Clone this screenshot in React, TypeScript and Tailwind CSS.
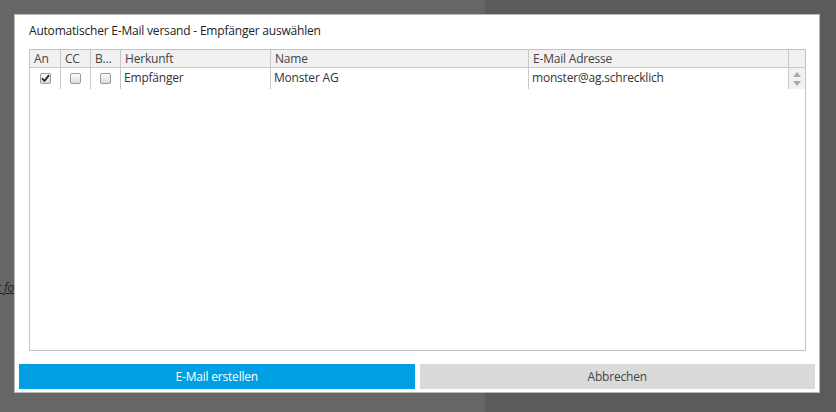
import React from 'react';

const font = { fontFamily: '"Open Sans", "Liberation Sans", sans-serif' };

function Checkbox({ checked }: { checked?: boolean }) {
  return (
    <span className="flex h-[11px] w-[11px] items-center justify-center rounded-[2px] border border-[#9a9a9a] bg-gradient-to-b from-[#fdfdfd] to-[#dcdcdc]">
      {checked ? (
        <svg width="9" height="9" viewBox="0 0 9 9">
          <path d="M1.5 4.8 L3.5 7 L7.6 1.6" fill="none" stroke="#2a2a2a" strokeWidth="1.8" strokeLinecap="round" strokeLinejoin="round" />
        </svg>
      ) : null}
    </span>
  );
}

const cols = [
  { key: 'an', label: 'An', w: 'w-[31px]' },
  { key: 'cc', label: 'CC', w: 'w-[30px]' },
  { key: 'bcc', label: 'B...', w: 'w-[30px]' },
  { key: 'herkunft', label: 'Herkunft', w: 'w-[150px]' },
  { key: 'name', label: 'Name', w: 'w-[258px]' },
  { key: 'email', label: 'E-Mail Adresse', w: 'w-[260px]' },
];

export default function App() {
  return (
    <div className="relative flex h-[412px] w-[836px] overflow-hidden text-[12px] tracking-[-0.2px]" style={font}>
      <div className="h-full w-[485px] bg-[#666666]" />
      <div className="h-full flex-1 bg-[#5b5b5b]" />

      {/* page content behind the overlay */}
      <div className="absolute left-0 top-[279px] flex w-[14px] justify-end overflow-hidden">
        <span className="whitespace-nowrap pr-[0px] italic text-[#1c1c2a] underline">Klicken Sie hier, um t fo</span>
      </div>

      <div className="absolute left-[14px] top-[14px] flex h-[379px] w-[806px] flex-col border border-[#b9b9b9] bg-white">
        <div className="pl-[14px] pt-[7px] text-[12px] leading-[18px] text-[#222]">
          Automatischer E-Mail versand - Empfänger auswählen
        </div>

        <div className="ml-[14px] mt-[9px] h-[302px] w-[777px] border border-[#c2c2c2]">
          <div className="flex h-[18px] border-b border-[#c8c8c8] bg-[#f1f1f1] leading-[17px] text-[#444]">
            {cols.map((c) => (
              <div key={c.key} className={`${c.w} overflow-hidden whitespace-nowrap border-r border-[#c8c8c8] pl-[4px]`}>
                {c.label}
              </div>
            ))}
            <div className="w-[16px]" />
          </div>

          <div className="flex h-[21px] leading-[20px] text-[#333]">
            <div className="flex w-[31px] items-center justify-center border-r border-[#c8c8c8] pl-[1px]">
              <Checkbox checked />
            </div>
            <div className="flex w-[30px] items-center justify-center border-r border-[#c8c8c8]">
              <Checkbox />
            </div>
            <div className="flex w-[30px] items-center justify-center border-r border-[#c8c8c8]">
              <Checkbox />
            </div>
            <div className="w-[150px] border-r border-[#c8c8c8] pl-[3px]">Empfänger</div>
            <div className="w-[258px] border-r border-[#c8c8c8] pl-[3px]">Monster AG</div>
            <div className="w-[260px] border-r border-[#c8c8c8] pl-[3px]">monster@ag.schrecklich</div>
            <div className="flex w-[16px] flex-col items-center justify-center gap-[4px] bg-[#f1f1f1]">
              <svg width="8" height="5" viewBox="0 0 8 5">
                <path d="M0 5 L4 0 L8 5 Z" fill="#a9a9a9" />
              </svg>
              <svg width="8" height="5" viewBox="0 0 8 5">
                <path d="M0 0 L8 0 L4 5 Z" fill="#a9a9a9" />
              </svg>
            </div>
          </div>
        </div>

        <div className="mt-[13px] flex gap-[5px] px-[4px]">
          <button className="h-[25px] w-[396px] bg-[#009fe3] text-[12px] tracking-[-0.2px] text-white" style={font}>
            E-Mail erstellen
          </button>
          <button className="h-[25px] w-[396px] bg-[#dadada] text-[12px] tracking-[-0.2px] text-[#444]" style={font}>
            Abbrechen
          </button>
        </div>
      </div>
    </div>
  );
}
